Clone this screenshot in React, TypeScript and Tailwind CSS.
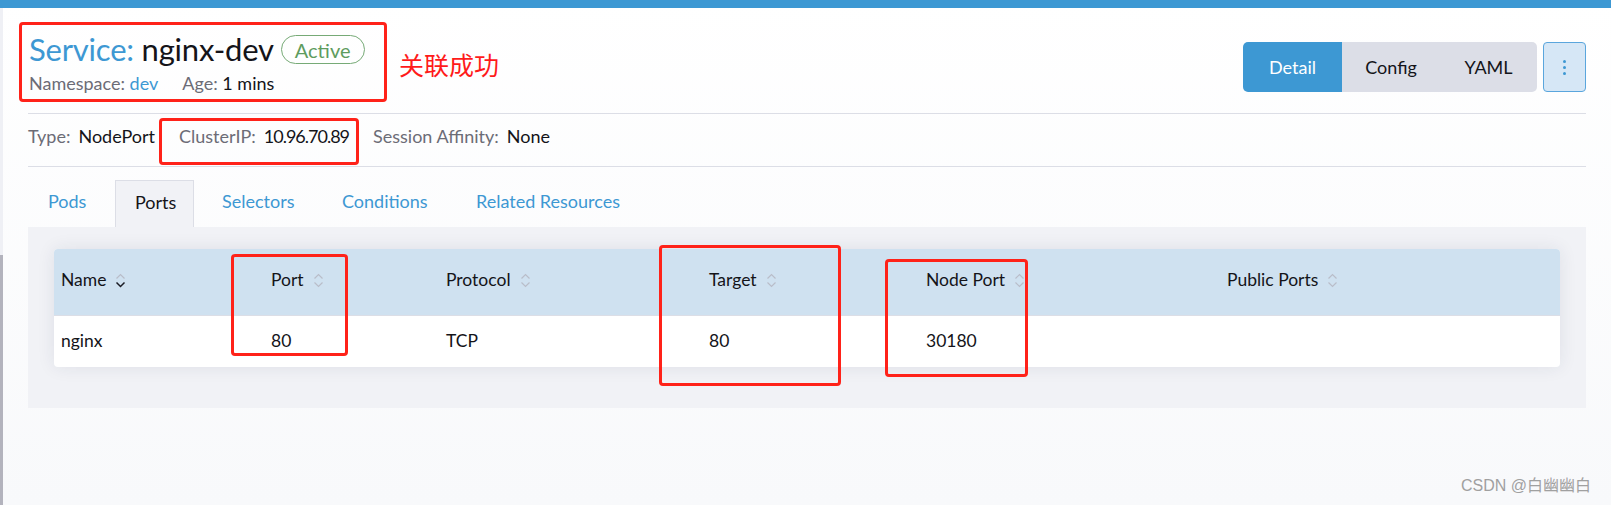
import React from "react";

const columns = [
  { label: "Name", width: "w-[210px]", active: true },
  { label: "Port", width: "w-[175px]" },
  { label: "Protocol", width: "w-[263px]" },
  { label: "Target", width: "w-[217px]" },
  { label: "Node Port", width: "w-[301px]" },
  { label: "Public Ports", width: "flex-1" },
];

const row = ["nginx", "80", "TCP", "80", "30180", ""];

function SortIcon({ active }: { active?: boolean }) {
  return (
    <svg width="11" height="15" viewBox="0 0 11 15" className="ml-[9px] shrink-0">
      <path d="M1.5 5.5 L5.5 1.5 L9.5 5.5" fill="none" stroke="#b9bdc9" strokeWidth="1.2" />
      <path
        d="M1.5 9.5 L5.5 13.5 L9.5 9.5"
        fill="none"
        stroke={active ? "#1b1c24" : "#b9bdc9"}
        strokeWidth={active ? 1.5 : 1.2}
      />
    </svg>
  );
}

function RedBox({ className }: { className: string }) {
  return <div className={`absolute border-[3px] border-[#ff2219] rounded-[4px] pointer-events-none ${className}`} />;
}

export default function App() {
  return (
    <div className="relative w-full h-[505px] overflow-hidden bg-linear-to-b from-white to-[#f8f9fb] font-['Lato',sans-serif] text-[#141419]">
      <div className="h-[8px] bg-[#3d98d3]" />

      {/* left scrollbar remains */}
      <div className="absolute left-0 top-[8px] w-[3px] h-[247px] bg-[#eff0f5]" />
      <div className="absolute left-0 top-[255px] w-[3px] h-[250px] bg-[#b3b3bd]" />

      <div className="pl-[28px] pr-[25px]">
        {/* header */}
        <div className="h-[106px] flex justify-between border-b border-[#dcdee6]">
          <div className="pt-[26px] pl-[1px]">
            <div className="flex items-center h-[31px]">
              <h1 className="text-[31px] leading-[31px] tracking-[-0.2px]">
                <span className="text-[#3d98d3]">Service:</span> nginx-dev
              </h1>
              <span className="ml-[7px] h-[29px] px-[13px] flex items-center rounded-full border border-[#76aa76] text-[#5e9c5e] text-[20px]">
                Active
              </span>
            </div>
            <div className="mt-[8px] flex gap-[24px] text-[18px] leading-[20px]">
              <span>
                <span className="text-[#6c6c76]">Namespace:</span>{" "}
                <span className="text-[#3d98d3]">dev</span>
              </span>
              <span>
                <span className="text-[#6c6c76]">Age:</span> 1 mins
              </span>
            </div>
          </div>

          <div className="pt-[34px] flex gap-[6px]">
            <div className="flex h-[50px] rounded-[5px] overflow-hidden text-[18px]">
              <button className="w-[99px] bg-[#3d98d3] text-white">Detail</button>
              <button className="w-[98px] bg-[#dcdee7]">Config</button>
              <button className="w-[97px] bg-[#dcdee7]">YAML</button>
            </div>
            <button className="w-[43px] h-[50px] rounded-[4px] bg-[#d6e7f6] border border-[#5aa6dd] flex flex-col items-center justify-center gap-[3px]">
              <span className="w-[3px] h-[3px] rounded-full bg-[#3d98d3]" />
              <span className="w-[3px] h-[3px] rounded-full bg-[#3d98d3]" />
              <span className="w-[3px] h-[3px] rounded-full bg-[#3d98d3]" />
            </button>
          </div>
        </div>

        {/* info row */}
        <div className="h-[53px] pt-[12px] border-b border-[#dcdee6] flex gap-[24px] text-[18px] leading-[20px]">
          <span>
            <span className="text-[#6c6c76]">Type:</span>
            <span className="ml-[8px]">NodePort</span>
          </span>
          <span>
            <span className="text-[#6c6c76]">ClusterIP:</span>
            <span className="ml-[8px] tracking-[-1px]">10.96.70.89</span>
          </span>
          <span>
            <span className="text-[#6c6c76]">Session Affinity:</span>
            <span className="ml-[8px]">None</span>
          </span>
        </div>

        {/* tabs */}
        <div className="mt-[13px] flex h-[47px] text-[18px] leading-[20px] text-[#3d98d3]">
          <div className="w-[87px] pl-[20px] pt-[11px]">Pods</div>
          <div className="w-[79px] pl-[19px] pt-[11px] bg-[#f1f2f6] border border-b-0 border-[#dcdee6] text-[#141419]">
            Ports
          </div>
          <div className="w-[128px] pl-[28px] pt-[11px]">Selectors</div>
          <div className="w-[134px] pl-[20px] pt-[11px]">Conditions</div>
          <div className="pl-[20px] pt-[11px]">Related Resources</div>
        </div>

        {/* panel */}
        <div className="h-[181px] bg-[#f1f2f6] px-[26px] pt-[22px]">
          <div className="rounded-[4px] overflow-hidden bg-white shadow-[0_0_18px_rgba(30,40,80,0.09)] text-[17.5px]">
            <div className="flex h-[67px] bg-[#cfe1f0] border-b border-[#dcdee6]">
              {columns.map((c) => (
                <div key={c.label} className={`${c.width} pl-[7px] pb-[4px] flex items-center`}>
                  <span>{c.label}</span>
                  <SortIcon active={c.active} />
                </div>
              ))}
            </div>
            <div className="flex h-[51px]">
              {columns.map((c, i) => (
                <div key={c.label} className={`${c.width} pl-[7px] flex items-center`}>
                  {row[i]}
                </div>
              ))}
            </div>
          </div>
        </div>
      </div>

      {/* annotations */}
      <RedBox className="left-[19px] top-[22px] w-[368px] h-[80px]" />
      <div className="absolute left-[399px] top-[49px] text-[25px] leading-[30px] text-[#ff1a1a] font-['Noto_Sans_CJK_SC',sans-serif]">
        关联成功
      </div>
      <RedBox className="left-[159px] top-[118px] w-[200px] h-[47px]" />
      <RedBox className="left-[231px] top-[254px] w-[117px] h-[102px]" />
      <RedBox className="left-[659px] top-[245px] w-[182px] h-[141px]" />
      <RedBox className="left-[885px] top-[259px] w-[143px] h-[118px]" />

      <div className="absolute left-[1461px] top-[476px] text-[16px] leading-[20px] text-[#a0a0a0] font-['Liberation_Sans','Noto_Sans_CJK_SC',sans-serif]">
        CSDN @白幽幽白
      </div>
    </div>
  );
}
